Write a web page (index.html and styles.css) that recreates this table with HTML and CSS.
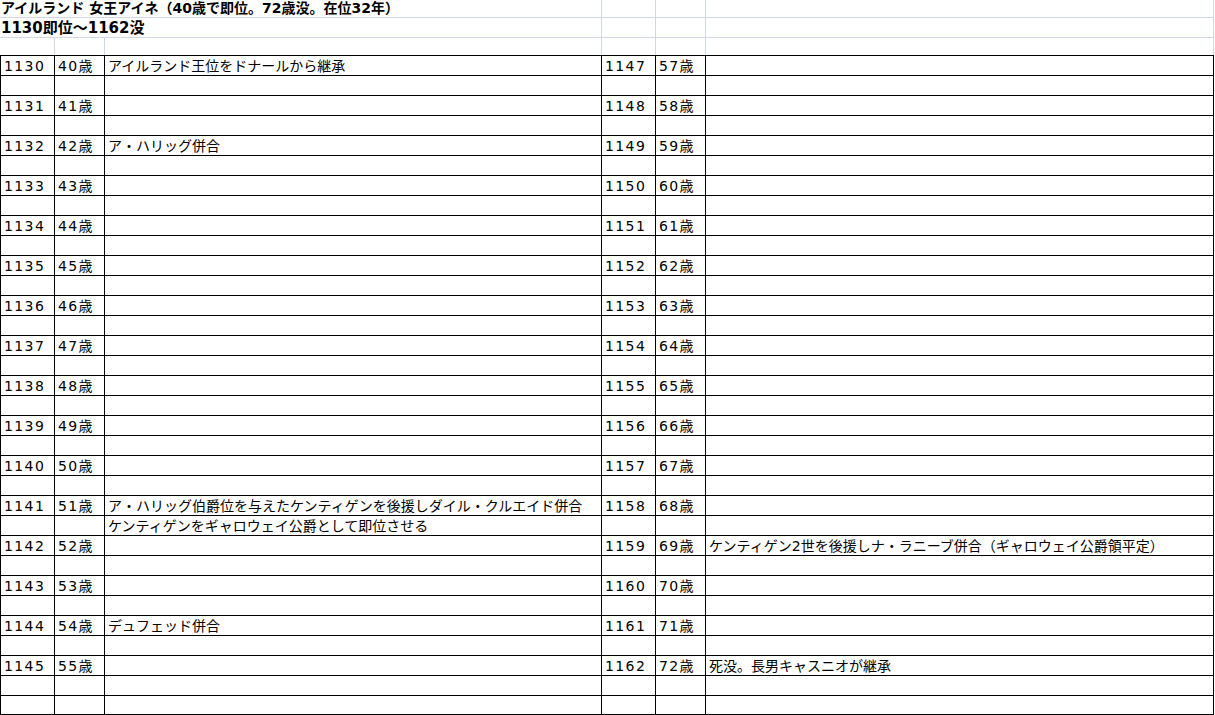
FILE: index.html
```html
<!DOCTYPE html>
<html lang="ja">
<head>
<meta charset="utf-8">
<title>アイルランド 女王アイネ</title>
<link rel="stylesheet" href="styles.css">
</head>
<body>
<div class="sheet">
  <div class="top">
    <div class="trow h1">
      <div class="g span"><span class="title">アイルランド 女王アイネ（40歳で即位。72歳没。在位32年）</span></div>
      <div class="g"></div><div class="g"></div><div class="g"></div>
    </div>
    <div class="trow h2">
      <div class="g span"><span class="sub">1130即位〜1162没</span></div>
      <div class="g"></div><div class="g"></div><div class="g"></div>
    </div>
    <div class="trow h3">
      <div class="g"></div><div class="g"></div><div class="g"></div><div class="g"></div><div class="g"></div><div class="g"></div>
    </div>
  </div>
  <div class="table">
    <div class="r"><div class="c">1130</div><div class="c">40歳</div><div class="c">アイルランド王位をドナールから継承</div><div class="c">1147</div><div class="c">57歳</div><div class="c"></div></div>
    <div class="r"><div class="c"></div><div class="c"></div><div class="c"></div><div class="c"></div><div class="c"></div><div class="c"></div></div>
    <div class="r"><div class="c">1131</div><div class="c">41歳</div><div class="c"></div><div class="c">1148</div><div class="c">58歳</div><div class="c"></div></div>
    <div class="r"><div class="c"></div><div class="c"></div><div class="c"></div><div class="c"></div><div class="c"></div><div class="c"></div></div>
    <div class="r"><div class="c">1132</div><div class="c">42歳</div><div class="c">ア・ハリッグ併合</div><div class="c">1149</div><div class="c">59歳</div><div class="c"></div></div>
    <div class="r"><div class="c"></div><div class="c"></div><div class="c"></div><div class="c"></div><div class="c"></div><div class="c"></div></div>
    <div class="r"><div class="c">1133</div><div class="c">43歳</div><div class="c"></div><div class="c">1150</div><div class="c">60歳</div><div class="c"></div></div>
    <div class="r"><div class="c"></div><div class="c"></div><div class="c"></div><div class="c"></div><div class="c"></div><div class="c"></div></div>
    <div class="r"><div class="c">1134</div><div class="c">44歳</div><div class="c"></div><div class="c">1151</div><div class="c">61歳</div><div class="c"></div></div>
    <div class="r"><div class="c"></div><div class="c"></div><div class="c"></div><div class="c"></div><div class="c"></div><div class="c"></div></div>
    <div class="r"><div class="c">1135</div><div class="c">45歳</div><div class="c"></div><div class="c">1152</div><div class="c">62歳</div><div class="c"></div></div>
    <div class="r"><div class="c"></div><div class="c"></div><div class="c"></div><div class="c"></div><div class="c"></div><div class="c"></div></div>
    <div class="r"><div class="c">1136</div><div class="c">46歳</div><div class="c"></div><div class="c">1153</div><div class="c">63歳</div><div class="c"></div></div>
    <div class="r"><div class="c"></div><div class="c"></div><div class="c"></div><div class="c"></div><div class="c"></div><div class="c"></div></div>
    <div class="r"><div class="c">1137</div><div class="c">47歳</div><div class="c"></div><div class="c">1154</div><div class="c">64歳</div><div class="c"></div></div>
    <div class="r"><div class="c"></div><div class="c"></div><div class="c"></div><div class="c"></div><div class="c"></div><div class="c"></div></div>
    <div class="r"><div class="c">1138</div><div class="c">48歳</div><div class="c"></div><div class="c">1155</div><div class="c">65歳</div><div class="c"></div></div>
    <div class="r"><div class="c"></div><div class="c"></div><div class="c"></div><div class="c"></div><div class="c"></div><div class="c"></div></div>
    <div class="r"><div class="c">1139</div><div class="c">49歳</div><div class="c"></div><div class="c">1156</div><div class="c">66歳</div><div class="c"></div></div>
    <div class="r"><div class="c"></div><div class="c"></div><div class="c"></div><div class="c"></div><div class="c"></div><div class="c"></div></div>
    <div class="r"><div class="c">1140</div><div class="c">50歳</div><div class="c"></div><div class="c">1157</div><div class="c">67歳</div><div class="c"></div></div>
    <div class="r"><div class="c"></div><div class="c"></div><div class="c"></div><div class="c"></div><div class="c"></div><div class="c"></div></div>
    <div class="r"><div class="c">1141</div><div class="c">51歳</div><div class="c">ア・ハリッグ伯爵位を与えたケンティゲンを後援しダイル・クルエイド併合</div><div class="c">1158</div><div class="c">68歳</div><div class="c"></div></div>
    <div class="r"><div class="c"></div><div class="c"></div><div class="c">ケンティゲンをギャロウェイ公爵として即位させる</div><div class="c"></div><div class="c"></div><div class="c"></div></div>
    <div class="r"><div class="c">1142</div><div class="c">52歳</div><div class="c"></div><div class="c">1159</div><div class="c">69歳</div><div class="c">ケンティゲン2世を後援しナ・ラニーブ併合（ギャロウェイ公爵領平定）</div></div>
    <div class="r"><div class="c"></div><div class="c"></div><div class="c"></div><div class="c"></div><div class="c"></div><div class="c"></div></div>
    <div class="r"><div class="c">1143</div><div class="c">53歳</div><div class="c"></div><div class="c">1160</div><div class="c">70歳</div><div class="c"></div></div>
    <div class="r"><div class="c"></div><div class="c"></div><div class="c"></div><div class="c"></div><div class="c"></div><div class="c"></div></div>
    <div class="r"><div class="c">1144</div><div class="c">54歳</div><div class="c">デュフェッド併合</div><div class="c">1161</div><div class="c">71歳</div><div class="c"></div></div>
    <div class="r"><div class="c"></div><div class="c"></div><div class="c"></div><div class="c"></div><div class="c"></div><div class="c"></div></div>
    <div class="r"><div class="c">1145</div><div class="c">55歳</div><div class="c"></div><div class="c">1162</div><div class="c">72歳</div><div class="c">死没。長男キャスニオが継承</div></div>
    <div class="r"><div class="c"></div><div class="c"></div><div class="c"></div><div class="c"></div><div class="c"></div><div class="c"></div></div>
    <div class="r last"><div class="c"></div><div class="c"></div><div class="c"></div><div class="c"></div><div class="c"></div><div class="c"></div></div>
  </div>
</div>
</body>
</html>
```
FILE: styles.css
```css
html, body {
  margin: 0;
  padding: 0;
  background: #ffffff;
  overflow: hidden;
}

.sheet {
  width: 1214px;
  font-family: "DejaVu Sans", "Noto Sans CJK JP", sans-serif;
  font-size: 14px;
  color: #000;
}

/* top area with light gridlines */
.top {
  display: flex;
  flex-direction: column;
}

.trow {
  display: grid;
  grid-template-columns: 55px 50px 497px 54px 50px 508px;
}

.trow.h1 { height: 18px; }
.trow.h2 { height: 19px; }
.trow.h3 { height: 18px; }

.g {
  box-sizing: border-box;
  border-right: 1px solid #d0d7e5;
  border-bottom: 1px solid #d0d7e5;
  white-space: nowrap;
}

.trow.h3 .g { border-bottom: none; }

.g.span {
  grid-column: 1 / 4;
  padding-left: 1px;
}

.title {
  display: block;
  font-weight: bold;
  font-size: 14px;
  line-height: 16px;
}

.sub {
  display: block;
  font-weight: bold;
  font-size: 15px;
  line-height: 18px;
  padding-top: 1px;
}

/* bordered table */
.table {
  display: flex;
  flex-direction: column;
  width: 1214px;
  box-sizing: border-box;
  border-left: 1px solid #000;
  border-top: 1px solid #000;
}

.r {
  display: grid;
  grid-template-columns: 54px 50px 497px 54px 50px 508px;
  height: 20px;
}

.r.last,
.r.last .c {
  height: 19px;
}

.c {
  box-sizing: border-box;
  height: 20px;
  border-right: 1px solid #000;
  border-bottom: 1px solid #000;
  padding: 2px 0 0 3px;
  line-height: 17px;
  white-space: nowrap;
}

.c:nth-child(1),
.c:nth-child(2),
.c:nth-child(4),
.c:nth-child(5) {
  letter-spacing: 1.4px;
}
```
